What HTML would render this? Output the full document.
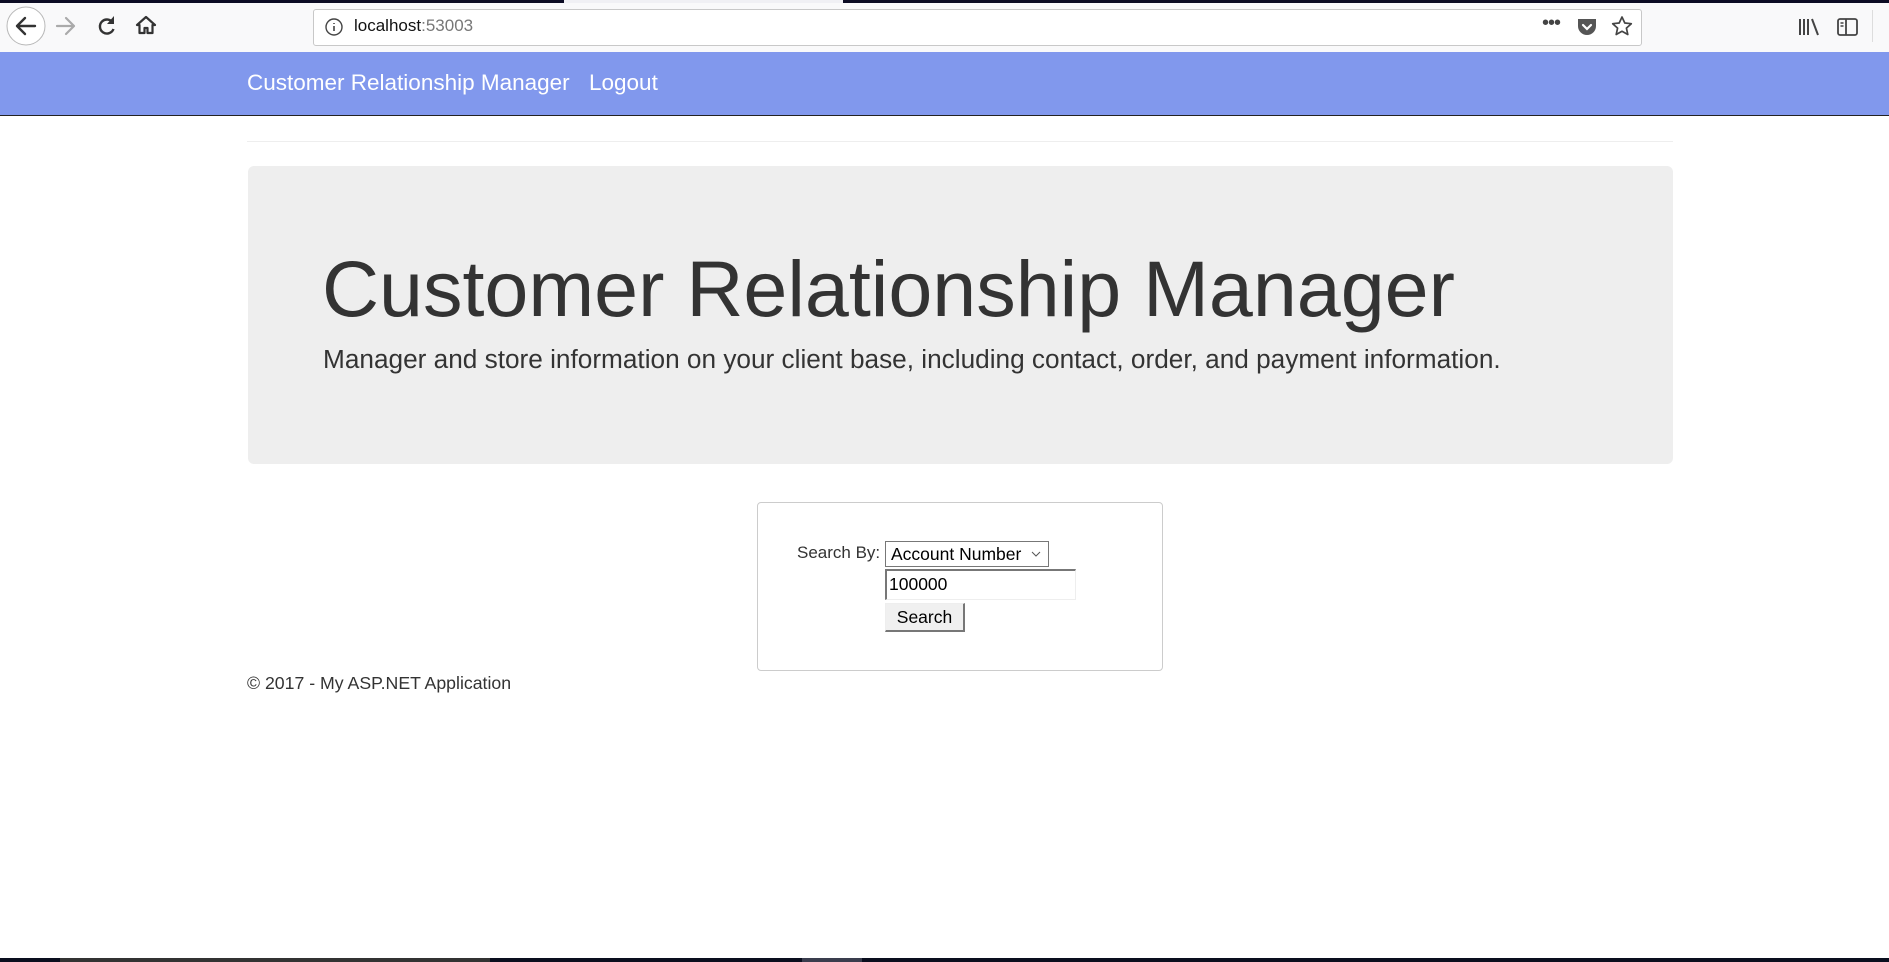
<!DOCTYPE html>
<html><head><meta charset="utf-8"><style>
*{margin:0;padding:0;box-sizing:border-box}
html,body{width:1889px;height:962px;overflow:hidden;background:#fff;font-family:"Liberation Sans",Arial,sans-serif;position:relative}
.abs{position:absolute}
</style></head><body>
<div class="abs" style="left:0;top:0;width:1889px;height:3px;background:#0c0c24"></div>
<div class="abs" style="left:564px;top:0;width:279px;height:3px;background:#f0f0f4"></div>
<div class="abs" style="left:0;top:3px;width:1889px;height:49px;background:#f9f9fa"></div>
<svg class="abs" style="left:0;top:0" width="180" height="52">
<circle cx="26" cy="26" r="19" fill="#fff" stroke="#b8b8b8" stroke-width="1"/>
<path d="M35 26H17M25 18l-8 8 8 8" fill="none" stroke="#333" stroke-width="2.4" stroke-linecap="round" stroke-linejoin="round"/>
<path d="M74 26H57M66 18l8 8-8 8" fill="none" stroke="#aaa" stroke-width="2.2" stroke-linecap="round" stroke-linejoin="round"/>
<path d="M113 23a7 7 0 1 0 0.5 6" fill="none" stroke="#333" stroke-width="2.4"/>
<path d="M114 16v8h-7z" fill="#333"/>
<path d="M146 17l-9 8h2.5v8h5v-5h3v5h5v-8h2.5z" fill="none" stroke="#333" stroke-width="2.2" stroke-linejoin="round"/>
</svg>
<div class="abs" style="left:313px;top:9px;width:1329px;height:37px;background:#fff;border:1px solid #c8c8c8;border-radius:3px"></div>
<svg class="abs" style="left:324px;top:17px" width="20" height="20"><circle cx="10" cy="10" r="8" fill="none" stroke="#444" stroke-width="1.4"/><path d="M10 9v5M10 6v1" stroke="#444" stroke-width="1.6"/></svg>
<div class="abs" style="left:354px;top:16px;font-size:17px;color:#111">localhost<span style="color:#777">:53003</span></div>
<div class="abs" style="left:1542px;top:12px;font-size:20px;color:#444;letter-spacing:-1px">•••</div>
<svg class="abs" style="left:1576px;top:16px" width="22" height="22"><path d="M2 3h18v7a9 9 0 0 1-18 0z" fill="#555"/><path d="M7 9l4 4 4-4" stroke="#fff" stroke-width="2.2" fill="none" stroke-linecap="round"/></svg>
<svg class="abs" style="left:1611px;top:15px" width="22" height="22"><path d="M11 2l2.8 6 6.5.7-4.9 4.4 1.4 6.4L11 16.3l-5.8 3.2 1.4-6.4L1.7 8.7 8.2 8z" fill="none" stroke="#444" stroke-width="1.7" stroke-linejoin="round"/></svg>
<svg class="abs" style="left:1797px;top:16px" width="26" height="22"><path d="M3 3v16M7 3v16M11 3v16M15 3l6 16" stroke="#444" stroke-width="2"/></svg>
<svg class="abs" style="left:1836px;top:16px" width="24" height="22"><rect x="2" y="3" width="19" height="16" rx="2" fill="none" stroke="#444" stroke-width="1.8"/><path d="M10 3v16" stroke="#444" stroke-width="1.8"/><path d="M4.5 7h3M4.5 10h3" stroke="#444" stroke-width="1.4"/></svg>
<div class="abs" style="left:1872px;top:10px;width:1px;height:32px;background:#ddd"></div>
<div class="abs" style="left:0;top:52px;width:1889px;height:64px;background:#8198ed;border-bottom:1px solid #222"></div>
<div class="abs" style="left:247px;top:70px;font-size:22.5px;color:#fff;white-space:nowrap">Customer Relationship Manager</div>
<div class="abs" style="left:589px;top:70px;font-size:22.5px;color:#fff">Logout</div>
<div class="abs" style="left:247px;top:141px;width:1426px;height:1px;background:#eee"></div>
<div class="abs" style="left:248px;top:166px;width:1425px;height:298px;background:#eee;border-radius:6px"></div>
<div class="abs" style="left:322px;top:244px;font-size:79px;line-height:90px;color:#333;white-space:nowrap">Customer Relationship Manager</div>
<div class="abs" style="left:323px;top:344px;font-size:26.2px;line-height:30px;color:#333;white-space:nowrap">Manager and store information on your client base, including contact, order, and payment information.</div>
<div class="abs" style="left:757px;top:502px;width:406px;height:169px;border:1px solid #ccc;border-radius:4px"></div>
<div class="abs" style="left:797px;top:543px;font-size:17px;color:#333">Search By:</div>
<div class="abs" style="left:885px;top:541px;width:164px;height:26px;border:1px solid #777;background:#fff;font-size:17.5px;color:#000;padding:2px 0 0 5px">Account Number</div>
<svg class="abs" style="left:1030px;top:549px" width="12" height="10"><path d="M2 3l4 4 4-4" stroke="#555" fill="none" stroke-width="1"/></svg>
<div class="abs" style="left:885px;top:569px;width:191px;height:31px;border-top:2px solid #777;border-left:2px solid #777;border-right:1px solid #eee;border-bottom:1px solid #eee;background:#fff;font-size:17.5px;color:#000;padding:3px 0 0 2px">100000</div>
<div class="abs" style="left:885px;top:603px;width:80px;height:29px;background:#f0f0f0;border-top:1px solid #eee;border-left:1px solid #eee;border-right:2px solid #777;border-bottom:2px solid #777;font-size:17.5px;color:#000;text-align:center;padding-top:3px">Search</div>
<div class="abs" style="left:247px;top:673px;font-size:17.7px;color:#333;white-space:nowrap">© 2017 - My ASP.NET Application</div>
<div class="abs" style="left:0;top:958px;width:1889px;height:4px;background:#0a0e1e"></div>
<div class="abs" style="left:60px;top:958px;width:430px;height:4px;background:#333"></div>
<div class="abs" style="left:802px;top:958px;width:60px;height:4px;background:#3a3d4e"></div>
</body></html>
